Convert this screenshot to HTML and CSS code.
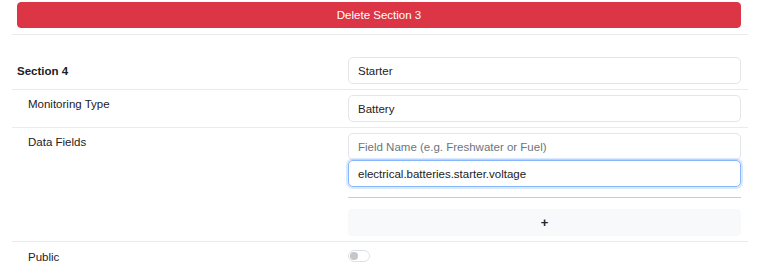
FILE: index.html
```html
<!DOCTYPE html>
<html lang="en">
  <head>
    <meta charset="UTF-8" />
    <title>Sections</title>
    <link rel="stylesheet" href="styles.css">
  </head>
  <body>
    <div class="wrap">
      <div class="top">
        <button class="btn-delete">Delete Section 3</button>
      </div>

      <div class="row row-head">
        <div class="label strong">Section 4</div>
        <div class="control">
          <input class="field" type="text" value="Starter">
        </div>
      </div>

      <div class="row">
        <div class="label sub">Monitoring Type</div>
        <div class="control">
          <input class="field" type="text" value="Battery">
        </div>
      </div>

      <div class="row">
        <div class="label sub">Data Fields</div>
        <div class="control">
          <input class="field" type="text" placeholder="Field Name (e.g. Freshwater or Fuel)">
          <input class="field focus" type="text" value="electrical.batteries.starter.voltage">
          <hr class="divider">
          <button class="btn-add">+</button>
        </div>
      </div>

      <div class="row row-last">
        <div class="label sub">Public</div>
        <div class="control">
          <span class="toggle"><span class="knob"></span></span>
        </div>
      </div>
    </div>
  </body>
</html>
```

FILE: styles.css
```css
* {
  box-sizing: border-box;
  margin: 0;
  padding: 0;
}

body {
  font: 11.5px "Liberation Sans", Arial, sans-serif;
  color: #1d2125;
  background: #fff;
}

.wrap {
  padding: 2px 12px 0;
}

.top {
  padding: 0 7px 6px 5px;
  border-bottom: 1px solid #e9ecef;
}

.btn-delete {
  display: block;
  width: 100%;
  height: 26px;
  border: 1px solid #dc3545;
  border-radius: 4px;
  background: #dc3545;
  color: #fff;
  font: inherit;
}

.row {
  display: grid;
  grid-template-columns: 331px 1fr;
  padding: 5px 7px 5px 5px;
  border-bottom: 1px solid #e9ecef;
}

.row-head {
  padding-top: 22px;
  align-items: center;
}

.row-last {
  border-bottom: 0;
  padding-top: 8px;
}

.label.strong {
  font-weight: bold;
}

.label.sub {
  padding: 3px 0 0 11px;
}

.row-last .label.sub {
  padding-top: 1px;
}

.control {
  display: flex;
  flex-direction: column;
}

.field {
  height: 27px;
  padding: 0 9px;
  border: 1px solid #e3e5e8;
  border-radius: 5px;
  font: inherit;
  color: #1d2125;
  outline: none;
}

.field::placeholder {
  color: #6c757d;
}

.field.focus {
  border-color: #86b7fe;
  box-shadow: 0 0 0 2px rgba(13, 110, 253, 0.15);
}

.divider {
  border: 0;
  border-top: 1px solid #ccc;
  margin: 10px 0 11px;
}

.btn-add {
  height: 27px;
  border: 0;
  border-radius: 4px;
  background: #f8f9fa;
  color: #212529;
  font: bold 13px "Liberation Sans", Arial, sans-serif;
}

.toggle {
  display: block;
  width: 22px;
  height: 12px;
  border: 1px solid #dee2e6;
  border-radius: 6px;
  position: relative;
}

.knob {
  position: absolute;
  left: 1px;
  top: 1px;
  width: 8px;
  height: 8px;
  border-radius: 50%;
  background: #c4c6c8;
}
```
